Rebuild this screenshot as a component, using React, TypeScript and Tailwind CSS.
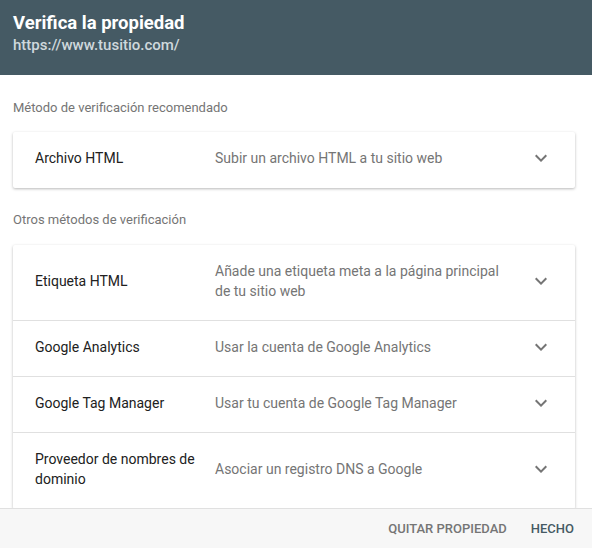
import React from 'react';

const recommended = [
    { name: 'Archivo HTML', desc: 'Subir un archivo HTML a tu sitio web' },
];

const others = [
    { name: 'Etiqueta HTML', desc: 'Añade una etiqueta meta a la página principal de tu sitio web' },
    { name: 'Google Analytics', desc: 'Usar la cuenta de Google Analytics' },
    { name: 'Google Tag Manager', desc: 'Usar tu cuenta de Google Tag Manager' },
    { name: 'Proveedor de nombres de dominio', desc: 'Asociar un registro DNS a Google' },
];

const Chevron = () => (
    <svg width="24" height="24" viewBox="0 0 24 24" className="shrink-0 -my-[2px] fill-[#757575]">
        <path d="M16.59 8.59L12 13.17 7.41 8.59 6 10l6 6 6-6z" />
    </svg>
);

const MethodRow = ({ name, desc, last }: { name: string; desc: string; last: boolean }) => (
    <div className={`flex items-center px-[22px] pt-[16px] ${last ? 'pb-[20px]' : 'pb-[19px] border-b border-[#e0e0e0]'}`}>
        <div className="w-[180px] shrink-0 pr-4 text-[14px] leading-5 text-[#212121]">{name}</div>
        <div className="flex-1 pr-[24px] text-[14px] leading-5 text-[#757575]">{desc}</div>
        <Chevron />
    </div>
);

const MethodCard = ({ items }: { items: { name: string; desc: string }[] }) => (
    <div className="ml-[13px] mr-[17px] bg-white rounded-[2px] shadow-[0_1px_3px_rgba(0,0,0,0.28)]">
        {items.map((item, index) => (
            <MethodRow key={index} name={item.name} desc={item.desc} last={index === items.length - 1} />
        ))}
    </div>
);

const App = () => {
    return (
        <div className="w-[592px] h-[548px] flex flex-col bg-white font-['Roboto','Liberation_Sans',sans-serif]">
            <div className="h-[75px] shrink-0 bg-[#455a64] px-[13px] pt-[11px]">
                <h2 className="text-[18.5px] leading-6 font-bold text-white">Verifica la propiedad</h2>
                <div className="text-[15px] leading-5 font-medium text-[#cfd8dc]">https://www.tusitio.com/</div>
            </div>

            <div className="flex-1 overflow-hidden">
                <div className="px-[13px] pt-[23px] pb-[14px] text-[13px] leading-5 text-[#757575]">
                    Método de verificación recomendado
                </div>
                <MethodCard items={recommended} />

                <div className="px-[13px] pt-[22px] pb-[15px] text-[13px] leading-5 text-[#757575]">
                    Otros métodos de verificación
                </div>
                <MethodCard items={others} />
            </div>

            <div className="h-[40px] shrink-0 bg-[#f7f7f7] border-t border-[#e0e0e0] flex items-center justify-end gap-6 pr-[18px]">
                <button className="text-[13px] font-medium uppercase text-[#757575]">Quitar propiedad</button>
                <button className="text-[13px] font-medium uppercase text-[#455a64]">Hecho</button>
            </div>
        </div>
    );
};

export default App;
